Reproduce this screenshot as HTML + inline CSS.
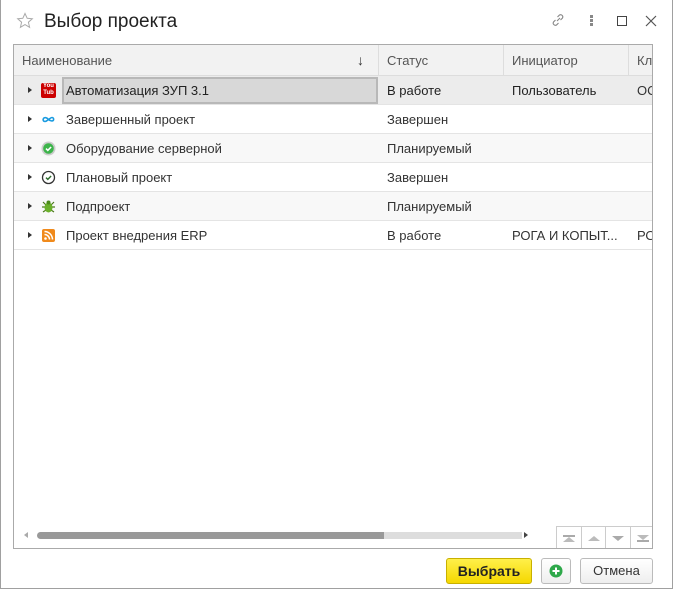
<!DOCTYPE html>
<html><head><meta charset="utf-8"><style>
*{margin:0;padding:0;box-sizing:border-box}
body{width:673px;height:589px;background:#fff;font-family:"Liberation Sans",Arial,sans-serif;font-size:13px;color:#333;position:relative;overflow:hidden}
.win{position:absolute;left:0;top:0;width:673px;height:589px;border:1px solid #a0a0a0;border-top:none}
.abs{position:absolute}
.title{left:44px;top:11px;font-size:19px;color:#222}
.grid{left:13px;top:44px;width:640px;height:505px;border:1px solid #aaa;overflow:hidden}
.hdr{left:0;top:0;width:640px;height:31px;background:#f2f2f2;border-bottom:1px solid #ddd}
.hc{position:absolute;top:0;height:31px;line-height:31px;color:#555;border-right:1px solid #ddd;padding-left:8px;white-space:nowrap;overflow:hidden}
.row{position:absolute;left:0;width:640px;height:29px;border-bottom:1px solid #e4e4e4}
.c{position:absolute;top:0;line-height:29px;white-space:nowrap;overflow:hidden;color:#333}
.tri{position:absolute;left:14px;top:11px;width:0;height:0;border-left:4px solid #333;border-top:3.5px solid transparent;border-bottom:3.5px solid transparent}
.ic{position:absolute;left:27px;top:7px;width:15px;height:15px}
.btn{position:absolute;top:558px;height:26px;border:1px solid #bbb;border-radius:3px;background:linear-gradient(#fff,#eee);text-align:center;line-height:24px}
</style></head><body>
<div class="win"></div>
<svg class="abs" style="left:16px;top:12px" width="18" height="18" viewBox="0 0 18 18"><path d="M9 1.5l2.2 4.8 5.1.5-3.9 3.4 1.2 5.1L9 12.6l-4.6 2.7 1.2-5.1L1.7 6.8l5.1-.5z" fill="none" stroke="#aaa" stroke-width="1"/></svg>
<div class="abs title">Выбор проекта</div>
<svg class="abs" style="left:549px;top:11px" width="18" height="18" viewBox="0 0 18 18"><path d="M8 10l3-3M6.5 9l-2 2a2.2 2.2 0 003 3l2-2M11.5 9l2-2a2.2 2.2 0 00-3-3l-2 2" fill="none" stroke="#888" stroke-width="1.1"/></svg>
<div class="abs" style="left:590px;top:15px;width:3px;height:3px;background:#888;box-shadow:0 4px #888,0 8px #888"></div>
<div class="abs" style="left:617px;top:16px;width:10px;height:10px;border:1.3px solid #444"></div>
<svg class="abs" style="left:645px;top:15px" width="12" height="12"><path d="M1 1l10 10M11 1L1 11" stroke="#555" stroke-width="1.2"/></svg>

<div class="abs grid">
 <div class="abs hdr">
  <div class="hc" style="left:0;width:365px">Наименование</div>
  <div class="abs" style="left:343px;top:7px;color:#333;font-size:14px">↓</div>
  <div class="hc" style="left:365px;width:125px">Статус</div>
  <div class="hc" style="left:490px;width:125px">Инициатор</div>
  <div class="hc" style="left:615px;width:40px;border:none">Кл</div>
 </div>
 <div class="row" style="top:31px;background:#ececec;height:29px">
  <div class="tri"></div>
  <div class="ic" style="background:#c00;border-radius:2px;color:#fff;font-size:6px;line-height:7px;text-align:center;font-weight:bold">You<br>Tub</div>
  <div class="abs" style="left:48px;top:1px;width:316px;height:27px;background:#d8d8d8;border:2px solid #b8b8b8"></div>
  <div class="c" style="left:52px;color:#222">Автоматизация ЗУП 3.1</div>
  <div class="c" style="left:373px;color:#222">В работе</div>
  <div class="c" style="left:498px;color:#222">Пользователь</div>
  <div class="c" style="left:623px">ОС</div>
 </div>
 <div class="row" style="top:60px">
  <div class="tri"></div>
  <svg class="ic" viewBox="0 0 15 15"><path d="M7.5 7.5c-1.5-2-4-2.5-5-1s0 3 1.5 3 2-1 3.5-2 2.5-2 3.5-2 2 1 1.5 2.5-3.5 1-5-.5z" fill="none" stroke="#1a9be0" stroke-width="1.6"/></svg>
  <div class="c" style="left:52px">Завершенный проект</div>
  <div class="c" style="left:373px">Завершен</div>
 </div>
 <div class="row" style="top:89px;background:#f8f8f8">
  <div class="tri"></div>
  <svg class="ic" viewBox="0 0 15 15"><circle cx="7.5" cy="7.5" r="7" fill="#ccc"/><circle cx="7.5" cy="7.5" r="5.3" fill="#3cb44a"/><path d="M5 7.6l1.8 1.8 3.3-3.4" fill="none" stroke="#fff" stroke-width="1.6"/></svg>
  <div class="c" style="left:52px">Оборудование серверной</div>
  <div class="c" style="left:373px">Планируемый</div>
 </div>
 <div class="row" style="top:118px">
  <div class="tri"></div>
  <svg class="ic" viewBox="0 0 15 15"><circle cx="7.5" cy="7.5" r="6" fill="none" stroke="#333" stroke-width="1.3"/><path d="M5 7.6l1.8 1.8 3.3-3.4" fill="none" stroke="#2a6a2a" stroke-width="1.4"/></svg>
  <div class="c" style="left:52px">Плановый проект</div>
  <div class="c" style="left:373px">Завершен</div>
 </div>
 <div class="row" style="top:147px;background:#f8f8f8">
  <div class="tri"></div>
  <svg class="ic" viewBox="0 0 15 15"><path d="M2 3l3 3M13 3l-3 3M1 8h3M14 8h-3M2 13l3-2M13 13l-3-2" stroke="#4a7a1a" stroke-width="1.2"/><ellipse cx="7.5" cy="8.5" rx="4" ry="5" fill="#6ab02a"/><circle cx="7.5" cy="3.5" r="2" fill="#4a8a1a"/></svg>
  <div class="c" style="left:52px">Подпроект</div>
  <div class="c" style="left:373px">Планируемый</div>
 </div>
 <div class="row" style="top:176px">
  <div class="tri"></div>
  <svg class="ic" viewBox="0 0 15 15"><rect x="1" y="1" width="13" height="13" rx="2" fill="#f08a1c"/><circle cx="4.5" cy="10.5" r="1.3" fill="#fff"/><path d="M3.5 6.5a5 5 0 015 5M3.5 3.5a8 8 0 018 8" fill="none" stroke="#fff" stroke-width="1.5"/></svg>
  <div class="c" style="left:52px">Проект внедрения ERP</div>
  <div class="c" style="left:373px">В работе</div>
  <div class="c" style="left:498px">РОГА И КОПЫТ...</div>
  <div class="c" style="left:623px">РО</div>
 </div>
 <div class="abs" style="left:10px;top:487px;width:0;height:0;border-right:4px solid #aaa;border-top:3.5px solid transparent;border-bottom:3.5px solid transparent"></div>
 <div class="abs" style="left:23px;top:487px;width:353px;height:7px;border-radius:4px;background:#999"></div>
 <div class="abs" style="left:370px;top:487px;width:138px;height:7px;background:#ddd"></div>
 <div class="abs" style="left:510px;top:487px;width:0;height:0;border-left:4px solid #444;border-top:3.5px solid transparent;border-bottom:3.5px solid transparent"></div>
 <div class="abs" style="left:542px;top:481px;width:98px;height:23px;border-top:1px solid #ccc;border-left:1px solid #ccc;display:flex">
  <div style="flex:1;border-right:1px solid #ccc;position:relative"><div class="abs" style="left:6px;top:8px;width:12px;height:2px;background:#aaa"></div><div class="abs" style="left:6px;top:10px;border-left:6px solid transparent;border-right:6px solid transparent;border-bottom:5px solid #bbb;width:0"></div></div>
  <div style="flex:1;border-right:1px solid #ccc;position:relative"><div class="abs" style="left:6px;top:9px;border-left:6px solid transparent;border-right:6px solid transparent;border-bottom:5px solid #bbb;width:0"></div></div>
  <div style="flex:1;border-right:1px solid #ccc;position:relative"><div class="abs" style="left:6px;top:9px;border-left:6px solid transparent;border-right:6px solid transparent;border-top:5px solid #aaa;width:0"></div></div>
  <div style="flex:1;position:relative"><div class="abs" style="left:6px;top:8px;border-left:6px solid transparent;border-right:6px solid transparent;border-top:5px solid #bbb;width:0"></div><div class="abs" style="left:6px;top:13px;width:12px;height:2px;background:#aaa"></div></div>
 </div>
</div>

<div class="btn" style="left:446px;width:86px;background:linear-gradient(#fff04a,#f5d800);border-color:#c8b000;color:#222;font-weight:bold;font-size:14px">Выбрать</div>
<div class="btn" style="left:541px;width:30px"><svg style="margin-top:5px" width="14" height="14" viewBox="0 0 14 14"><circle cx="7" cy="7" r="6.5" fill="#2ea84a"/><path d="M7 3.5v7M3.5 7h7" stroke="#fff" stroke-width="2"/></svg></div>
<div class="btn" style="left:580px;width:73px;color:#333">Отмена</div>
</body></html>
